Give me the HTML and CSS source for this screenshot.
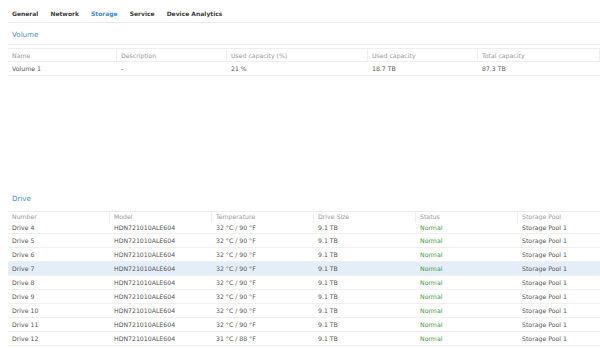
FILE: index.html
```html
<!DOCTYPE html>
<html lang="en">
<head>
    <meta charset="UTF-8">
    <title>Storage</title>
    <link rel="stylesheet" href="styles.css">
</head>
<body>
    <div class="tabs">
        <span class="tab">General</span>
        <span class="tab">Network</span>
        <span class="tab active">Storage</span>
        <span class="tab">Service</span>
        <span class="tab">Device Analytics</span>
    </div>

    <!-- Volume -->
    <div class="section volume-section">
        <div class="section-title">Volume</div>
        <div class="grid volume-grid">
            <div class="row head">
                <div class="cell">Name</div>
                <div class="cell">Description</div>
                <div class="cell">Used capacity (%)</div>
                <div class="cell">Used capacity</div>
                <div class="cell">Total capacity</div>
            </div>
            <div class="row">
                <div class="cell">Volume 1</div>
                <div class="cell">-</div>
                <div class="cell">21 %</div>
                <div class="cell">18.7 TB</div>
                <div class="cell">87.3 TB</div>
            </div>
        </div>
    </div>

    <!-- Drive -->
    <div class="section drive-section">
        <div class="section-title">Drive</div>
        <div class="grid drive-grid">
            <div class="row head">
                <div class="cell">Number</div>
                <div class="cell">Model</div>
                <div class="cell">Temperature</div>
                <div class="cell">Drive Size</div>
                <div class="cell">Status</div>
                <div class="cell">Storage Pool</div>
            </div>
            <div class="drive-body" id="drive-body"></div>
        </div>
    </div>

    <script>
        var drives = [
            { n: 4, t: '32 °C / 90 °F' },
            { n: 5, t: '32 °C / 90 °F' },
            { n: 6, t: '32 °C / 90 °F' },
            { n: 7, t: '32 °C / 90 °F', selected: true },
            { n: 8, t: '32 °C / 90 °F' },
            { n: 9, t: '32 °C / 90 °F' },
            { n: 10, t: '32 °C / 90 °F' },
            { n: 11, t: '32 °C / 90 °F' },
            { n: 12, t: '31 °C / 88 °F' }
        ];
        var html = '';
        drives.forEach(function (d) {
            html += '<div class="row' + (d.selected ? ' selected' : '') + '">' +
                '<div class="cell">Drive ' + d.n + '</div>' +
                '<div class="cell">HDN721010ALE604</div>' +
                '<div class="cell">' + d.t + '</div>' +
                '<div class="cell">9.1 TB</div>' +
                '<div class="cell status">Normal</div>' +
                '<div class="cell">Storage Pool 1</div>' +
                '</div>';
        });
        document.getElementById('drive-body').innerHTML = html;
    </script>
</body>
</html>
```

FILE: styles.css
```css
body {
    margin: 0;
    width: 600px;
    height: 348px;
    overflow: hidden;
    background: #fff;
    font-family: "DejaVu Sans", Verdana, sans-serif;
    font-size: 6.2px;
    color: #555;
}
.tabs {
    display: flex;
    gap: 12px;
    height: 23px;
    align-items: center;
    margin-left: 8px;
    padding: 0 4px;
    border-bottom: 1px solid #ececec;
    box-sizing: border-box;
    padding-top: 5px;
}
.tab {
    font-weight: bold;
    font-size: 6px;
    color: #3a3a3a;
}
.tab.active {
    color: #3c8bcf;
}
.section {
    margin-left: 8px;
    overflow: hidden;
}
.section-title {
    color: #3d8fd2;
    font-size: 7.1px;
    padding: 0 4px;
    display: flex;
    align-items: center;
}
.volume-section .section-title {
    height: 20px;
    padding-top: 1px;
    border-bottom: 1px solid #eeeeee;
}
.volume-grid {
    margin-top: 3px;
    border-top: 1px solid #eeeeee;
}
.row {
    display: grid;
    height: 14px;
    box-sizing: border-box;
    align-items: center;
    border-bottom: 1px solid #efefef;
    white-space: nowrap;
}
.volume-grid .row {
    grid-template-columns: 109px 110px 141px 110px 1fr;
}
.volume-grid .row.head {
    height: 13px;
}
.cell {
    padding: 0 4px;
    height: 100%;
    display: flex;
    align-items: center;
    overflow: hidden;
}
.head .cell {
    color: #9a9a9a;
    border-right: 1px solid #f0f0f0;
}
.drive-section {
    margin-top: 113px;
}
.drive-section .section-title {
    height: 19px;
    padding-bottom: 3px;
}
.drive-grid {
    border-top: 1px solid #eeeeee;
}
.drive-grid .row {
    grid-template-columns: repeat(6, 102px);
}
.drive-grid .row.head {
    height: 10px;
    border-bottom: none;
}
.drive-grid .head .cell {
    align-items: flex-start;
    padding-top: 1px;
}
.drive-body {
    overflow: hidden;
}
.drive-body .row:first-child {
    height: 12px;
}
.drive-body .row:first-child .cell {
    align-items: flex-end;
    padding-bottom: 2px;
    box-sizing: border-box;
}
.row.selected {
    background: #e3eef9;
}
.status {
    color: #3a9b3a;
}
```
